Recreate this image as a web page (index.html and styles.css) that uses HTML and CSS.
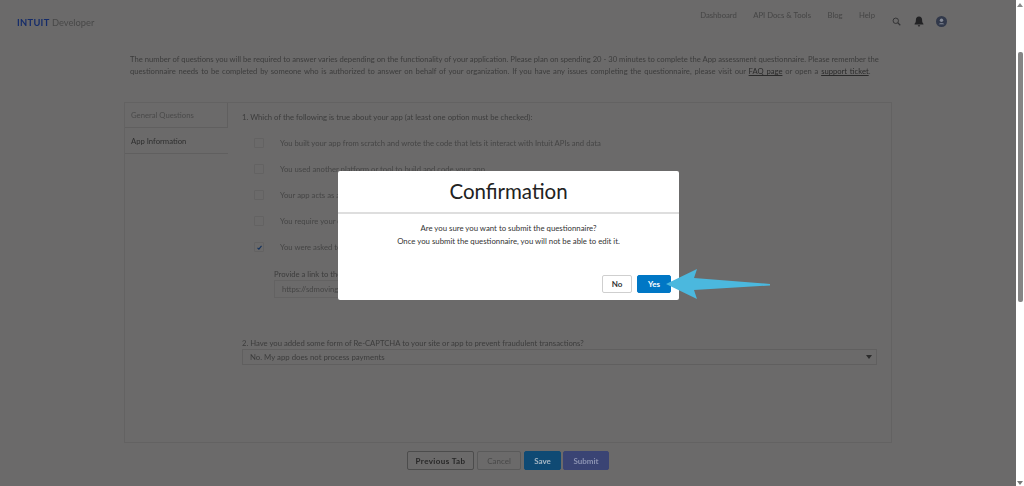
FILE: index.html
```html
<!DOCTYPE html>
<html lang="en">
  <head>
    <meta charset="UTF-8" />
    <meta name="viewport" content="width=device-width, initial-scale=1.0" />
    <title>App assessment questionnaire</title>
    <link rel="stylesheet" href="styles.css">
  </head>
  <body>
    <div class="page">
      <header class="topbar">
        <div class="logo"><span class="logo-mark">INTUIT</span> <span class="logo-name">Developer</span></div>
        <nav class="nav">
          <a>Dashboard</a>
          <a>API Docs &amp; Tools</a>
          <a>Blog</a>
          <a>Help</a>
        </nav>
        <div class="nav-icons">
          <svg class="search-icon" width="9" height="9" viewBox="0 0 10 10"><circle cx="4.2" cy="4.2" r="3" fill="none" stroke="#343436" stroke-width="1.1"/><path d="M6.4 6.4 9.2 9.2" stroke="#343436" stroke-width="1.3"/></svg>
          <svg width="10" height="11" viewBox="0 0 10 11"><path d="M5 0.6c-2 0-3.1 1.4-3.1 3.2 0 2.2-.4 3-1.3 4v.7h8.8v-.7c-.9-1-1.3-1.8-1.3-4C8.100 2 7 .6 5 .6z" fill="#222224"/><path d="M3.800 9.300h2.400a1.200 1.200 0 0 1-2.400 0z" fill="#222224"/></svg>
          <svg width="11" height="11" viewBox="0 0 11 11"><circle cx="5.500" cy="5.500" r="5.500" fill="#31384a"/><circle cx="5.500" cy="4.200" r="1.700" fill="#858a96"/><path d="M2.600 8.300c.5-1.500 5.300-1.500 5.800 0z" fill="#858a96"/></svg>
        </div>
      </header>

      <p class="intro">The number of questions you will be required to answer varies depending on the functionality of your application. Please plan on spending 20 - 30 minutes to complete the App assessment questionnaire. Please remember <span class="intro-end">the questionnaire needs to be completed by someone who is authorized to answer on behalf of your organization. If you have any issues completing the questionnaire, please visit our <a>FAQ page</a> or open a <a>support ticket</a>.</span></p>

      <section class="card">
        <aside class="tabs">
          <div class="tab">General Questions</div>
          <div class="tab tab-active">App Information</div>
        </aside>
        <div class="questions">
          <p class="question">1. Which of the following is true about your app (at least one option must be checked):</p>
          <div class="option"><span class="check"></span>You built your app from scratch and wrote the code that lets it interact with Intuit APIs and data</div>
          <div class="option"><span class="check"></span>You used another platform or tool to build and code your app</div>
          <div class="option"><span class="check"></span>Your app acts as a connector between QuickBooks and another app</div>
          <div class="option"><span class="check"></span>You require your customers to sign in to another service before connecting to your app</div>
          <div class="option"><span class="check"><svg width="7" height="7" viewBox="0 0 7 7"><path d="M1.500 3.800 2.900 5.200 5.500 1.800" fill="none" stroke="#12305c" stroke-width="1.100"/></svg></span>You were asked to build this app by a customer who will connect it to their own data in QuickBooks</div>
          <label class="link-label">Provide a link to the website of your app</label>
          <div class="link-input">https://sdmoving.com</div>
          <p class="question question-two">2. Have you added some form of Re-CAPTCHA to your site or app to prevent fraudulent transactions?</p>
          <div class="select">No. My app does not process payments<span class="caret"></span></div>
        </div>
      </section>

      <div class="actions">
        <button class="btn btn-prev">Previous Tab</button>
        <button class="btn btn-cancel">Cancel</button>
        <button class="btn btn-save">Save</button>
        <button class="btn btn-submit">Submit</button>
      </div>
    </div>

    <div class="scrollbar">
      <span class="arrow-up"></span>
      <span class="thumb"></span>
      <span class="arrow-down"></span>
    </div>

    <div class="modal">
      <h2 class="modal-title">Confirmation</h2>
      <div class="modal-body">
        <p>Are you sure you want to submit the questionnaire?</p>
        <p>Once you submit the questionnaire, you will not be able to edit it.</p>
      </div>
      <div class="modal-actions">
        <button class="modal-btn modal-no">No</button>
        <button class="modal-btn modal-yes">Yes</button>
      </div>
    </div>

    <svg class="pointer" width="106" height="34" viewBox="0 0 106 34">
      <path d="M1 17 32 2 29 11 105 17 105 18.500 29 23 32 32z" fill="#4bb8de"/>
    </svg>
  </body>
</html>
```

FILE: styles.css
```css
* {
  margin: 0;
  padding: 0;
  box-sizing: border-box;
}
html,
body {
  height: 100%;
  overflow: hidden;
}
body {
  display: flex;
  background-color: #6b6a6a;
  color: #333;
  font-family: Lato, sans-serif;
}
.page {
  flex: 1;
  min-width: 0;
  filter: blur(0.4px);
}
.topbar {
  display: flex;
  height: 46px;
  padding-left: 17px;
}
.logo {
  margin-top: 16px;
  font-size: 9.300px;
  line-height: 14px;
}
.logo-mark {
  color: #152c6a;
  font-weight: 700;
  letter-spacing: 0.3px;
}
.logo-name {
  color: #484848;
}
.nav {
  display: flex;
  gap: 16.500px;
  margin-left: auto;
  padding-top: 10px;
  font-size: 7.700px;
  line-height: 11px;
  color: #454545;
}
.nav-icons {
  display: flex;
  align-items: center;
  gap: 12px;
  height: 11px;
  margin: 16px 69px 0 17px;
}
.search-icon {
  margin-right: 1px;
}
.intro {
  width: 755px;
  margin-left: 130px;
  margin-top: 7px;
  font-size: 7.650px;
  line-height: 12px;
  color: #3c3c3c;
}
.intro-end {
  word-spacing: 0.8px;
}
.intro a {
  text-decoration: underline;
  color: #2a2a2a;
}
.card {
  display: flex;
  width: 768px;
  height: 341px;
  margin: 25px 0 0 124px;
  border: 1px solid #636262;
}
.tabs {
  width: 103px;
  flex-shrink: 0;
  font-size: 7.700px;
}
.tab {
  height: 25px;
  padding: 7px 6px 0;
  line-height: 11px;
  color: #4a4a4a;
  border-right: 1px solid #605f5f;
  border-bottom: 1px solid #605f5f;
}
.tab-active {
  height: 26px;
  padding-top: 8px;
  color: #2e2e2e;
  border-right: none;
}
.questions {
  flex: 1;
  padding: 9px 14px 0;
}
.question {
  font-size: 7.700px;
  line-height: 11px;
  color: #3c3c3c;
}
.option {
  display: flex;
  align-items: center;
  height: 26px;
  padding-left: 12px;
  font-size: 7.700px;
  color: #454545;
}
.option:first-of-type {
  margin-top: 7px;
}
.check {
  display: flex;
  align-items: center;
  justify-content: center;
  width: 10px;
  height: 10px;
  margin-right: 16px;
  border: 1px solid #636262;
  border-radius: 1px;
}
.link-label {
  display: block;
  margin: 9px 0 0 32px;
  font-size: 7.700px;
  line-height: 11px;
  color: #3c3c3c;
}
.link-input {
  width: 340px;
  height: 18px;
  margin-left: 32px;
  padding-left: 7px;
  font-size: 7.700px;
  line-height: 16px;
  color: #454545;
  border: 1px solid #636262;
}
.question-two {
  margin-top: 40px;
}
.select {
  position: relative;
  width: 635px;
  height: 16px;
  padding-left: 7px;
  font-size: 7.800px;
  line-height: 14px;
  color: #3c3c3c;
  border: 1px solid #605f5f;
}
.caret {
  position: absolute;
  top: 5px;
  right: 4px;
  border-top: 4px solid #2c2c2c;
  border-left: 3.500px solid transparent;
  border-right: 3.500px solid transparent;
}
.actions {
  display: flex;
  justify-content: flex-start;
  gap: 3px;
  margin: 8px 0 0 407px;
}
.btn {
  height: 19px;
  border-radius: 2px;
  border: 1px solid #4c4c4c;
  background: transparent;
  font-family: inherit;
  font-size: 8px;
  font-weight: 700;
}
.btn-prev {
  width: 67px;
  color: #272727;
  letter-spacing: 0.4px;
}
.btn-cancel {
  width: 44px;
  color: #484848;
  font-weight: 400;
  border-color: #5a5a5a;
}
.btn-save {
  width: 37px;
  background-color: #0f4a74;
  border-color: #0f4a74;
  color: #a9b9c6;
}
.btn-submit {
  width: 46px;
  margin-left: -1px;
  background-color: #3a4474;
  border-color: #3a4474;
  color: #8c93b2;
}
.scrollbar {
  display: flex;
  flex-direction: column;
  align-items: center;
  width: 8px;
  flex-shrink: 0;
  background-color: #fff;
}
.arrow-up,
.arrow-down {
  border-left: 3px solid transparent;
  border-right: 3px solid transparent;
}
.arrow-up {
  margin-top: 3px;
  border-bottom: 4px solid #8a8a8a;
}
.arrow-down {
  margin-top: auto;
  margin-bottom: 1px;
  border-top: 4px solid #777;
}
.thumb {
  width: 5px;
  height: 250px;
  margin-top: 45px;
  border-radius: 2px;
  background-color: #858585;
}
.modal {
  position: absolute;
  top: 171px;
  left: 338px;
  display: flex;
  flex-direction: column;
  width: 341px;
  height: 129px;
  background-color: #fff;
  border-radius: 2px;
}
.modal-title {
  height: 43px;
  border-bottom: 2px solid #dedede;
  text-align: center;
  font-size: 20.500px;
  font-weight: 400;
  line-height: 41px;
  color: #222;
}
.modal-body {
  padding-top: 8px;
  text-align: center;
  font-size: 7.800px;
  line-height: 12.500px;
  color: #333;
}
.modal-actions {
  display: flex;
  justify-content: flex-end;
  gap: 5px;
  margin-top: auto;
  padding: 0 8px 7px 0;
}
.modal-btn {
  height: 18px;
  border-radius: 2px;
  font-family: inherit;
  font-size: 8px;
  font-weight: 700;
}
.modal-no {
  width: 30px;
  background: #fff;
  border: 1px solid #cfcfcf;
  color: #333;
}
.modal-yes {
  width: 34px;
  background-color: #0077c5;
  border: 1px solid #0077c5;
  color: #fff;
}
.pointer {
  position: absolute;
  top: 267px;
  left: 665px;
}
```
